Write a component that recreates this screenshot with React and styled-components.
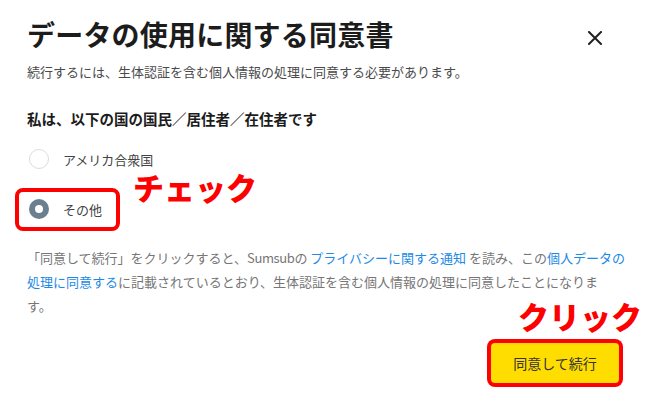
import React from "react";
import styled, { createGlobalStyle } from "styled-components";

const GlobalStyle = createGlobalStyle`
  html, body { margin: 0; padding: 0; background: #ffffff; }
  body { font-family: "Noto Sans CJK JP", "Noto Sans", sans-serif; }
  *, *::before, *::after { box-sizing: border-box; }
`;

const Page = styled.div`
  position: relative;
  width: 645px;
  height: 407px;
  padding: 17px 26px 0 27px;
  background: #fff;
  overflow: hidden;
`;

const Header = styled.div`
  display: flex;
  justify-content: space-between;
  align-items: flex-start;
`;

const Title = styled.h1`
  margin: 0;
  font-size: 28px;
  line-height: 34px;
  font-weight: 700;
  color: #1c1c1c;
  letter-spacing: 0.2px;
`;

const CloseButton = styled.button`
  border: none;
  background: none;
  padding: 0;
  margin: 14px 17px 0 0;
  width: 14px;
  height: 14px;
  display: flex;
  cursor: pointer;
`;

const Subtitle = styled.p`
  margin: 11px 0 0;
  font-size: 13px;
  line-height: 20px;
  color: #4a4a4a;
`;

const Label = styled.p`
  margin: 27px 0 0;
  font-size: 14.5px;
  line-height: 20px;
  font-weight: 700;
  color: #1c1c1c;
`;

const RadioGroup = styled.div`
  display: flex;
  flex-direction: column;
  gap: 8px;
  margin-top: 9px;
`;

const RadioRow = styled.label`
  position: relative;
  display: flex;
  align-items: center;
  gap: 14px;
  height: 42px;
  padding-left: 2px;
  font-size: 13px;
  color: #444;
  cursor: pointer;
  ${(p) =>
    p.$highlighted &&
    `
    &::after {
      content: "";
      position: absolute;
      left: -12px;
      top: 0;
      width: 105px;
      height: 43px;
      border: 4px solid #ff0000;
      border-radius: 8px;
    }
  `}
`;

const RadioCircle = styled.span`
  width: 20px;
  height: 20px;
  border-radius: 50%;
  display: flex;
  align-items: center;
  justify-content: center;
  border: ${(p) => (p.$checked ? "none" : "1px solid #dcdcdc")};
  background: ${(p) => (p.$checked ? "#6c7f8e" : "#fff")};
  &::before {
    content: "";
    display: ${(p) => (p.$checked ? "block" : "none")};
    width: 8px;
    height: 8px;
    border-radius: 50%;
    background: #fff;
  }
`;

const Notice = styled.p`
  margin: 16px 0 0;
  font-size: 13px;
  line-height: 24px;
  color: #767676;
  white-space: nowrap;
`;

const Latin = styled.span`
  letter-spacing: -0.4px;
`;

const Link = styled.a`
  color: #1e8ae6;
  text-decoration: none;
`;

const Footer = styled.div`
  display: flex;
  justify-content: flex-end;
  margin-top: 25px;
`;

const PrimaryButton = styled.button`
  width: 128px;
  height: 40px;
  border: none;
  border-radius: 4px;
  background: #ffdd00;
  color: #333;
  font-family: inherit;
  font-size: 14px;
  box-shadow: 0 0 0 4px #ff0000;
  cursor: pointer;
`;

const Annotation = styled.span`
  position: absolute;
  left: ${(p) => p.$x}px;
  top: ${(p) => p.$y}px;
  font-size: 31px;
  line-height: 1;
  font-weight: 900;
  color: #ff0000;
  white-space: nowrap;
`;

export default function App() {
  return (
    <>
      <GlobalStyle />
      <Page>
        <Header>
          <Title>データの使用に関する同意書</Title>
          <CloseButton aria-label="閉じる">
            <svg width="14" height="14" viewBox="0 0 14 14">
              <path d="M1 1 L13 13 M13 1 L1 13" stroke="#222" strokeWidth="2" strokeLinecap="square" />
            </svg>
          </CloseButton>
        </Header>
        <Subtitle>続行するには、生体認証を含む個人情報の処理に同意する必要があります。</Subtitle>
        <Label>私は、以下の国の国民／居住者／在住者です</Label>
        <RadioGroup>
          <RadioRow>
            <RadioCircle />
            アメリカ合衆国
          </RadioRow>
          <RadioRow $highlighted>
            <RadioCircle $checked />
            その他
          </RadioRow>
        </RadioGroup>
        <Notice>
          「同意して続行」をクリックすると、<Latin>Sumsub</Latin>の <Link>プライバシーに関する通知</Link> を読み、この<Link>個人データの</Link>
          <br />
          <Link>処理に同意する</Link>に記載されているとおり、生体認証を含む個人情報の処理に同意したことになりま
          <br />
          す。
        </Notice>
        <Footer>
          <PrimaryButton>同意して続行</PrimaryButton>
        </Footer>
        <Annotation $x={133} $y={171}>チェック</Annotation>
        <Annotation $x={518} $y={300}>クリック</Annotation>
      </Page>
    </>
  );
}
